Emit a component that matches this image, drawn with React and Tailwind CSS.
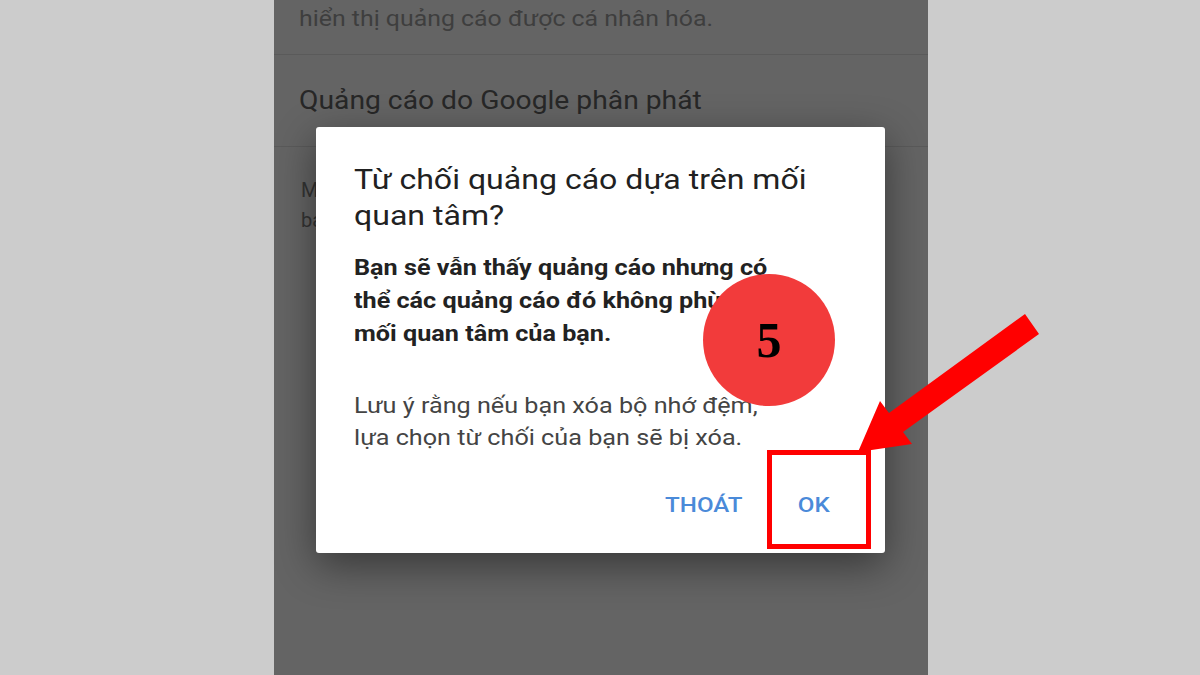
export default function App() {
  return (
    <div className="relative w-[1200px] h-[675px] overflow-hidden bg-[#cccccc] font-['Roboto',sans-serif]">
      {/* phone screen, dimmed behind the dialog */}
      <div className="relative ml-[274px] w-[654px] h-[675px] bg-[#646464]">
        <div className="h-[55px] pl-[25px] pt-[4px] border-b border-[#5a5a5a] text-[22px] text-[#3e3e3e] leading-[30px]">
          <p className="origin-left scale-x-[1.13]">hiển thị quảng cáo được cá nhân hóa.</p>
        </div>
        <div className="h-[92px] pl-[25px] pt-[31px] border-b border-[#5a5a5a] text-[25px] text-[#272727] leading-[30px]">
          <p className="origin-left scale-x-[1.13]">Quảng cáo do Google phân phát</p>
        </div>
        <div className="pl-[27px] pt-[28px] text-[20px] text-[#333333] leading-[30px]">
          <p>Mọi quảng cáo do Google phân phát</p>
          <p>bạn thấy đều dựa trên sở thích</p>
        </div>

        {/* dialog */}
        <div className="absolute left-[42px] top-[127px] w-[569px] h-[426px] bg-white rounded-[3px] shadow-[0_12px_40px_rgba(0,0,0,0.45)] pl-[38px] pr-[30px] pt-[35px]">
          <h2 className="origin-left scale-x-[1.145] text-[28px] leading-[36px] text-[#212121]">
            Từ chối quảng cáo dựa trên mối
            <br />
            quan tâm?
          </h2>
          <p className="origin-left scale-x-[1.145] mt-[17px] text-[22px] leading-[33px] font-bold text-[#222222]">
            Bạn sẽ vẫn thấy quảng cáo nhưng có
            <br />
            thể các quảng cáo đó không phù hợp
            <br />
            mối quan tâm của bạn.
          </p>
          <p className="origin-left scale-x-[1.145] mt-[40px] text-[22px] leading-[32px] text-[#444444]">
            Lưu ý rằng nếu bạn xóa bộ nhớ đệm,
            <br />
            lựa chọn từ chối của bạn sẽ bị xóa.
          </p>
          <div className="mt-[37px] flex justify-end gap-[48px] pr-[22px] text-[21px] font-medium text-[#4a8ad9] leading-[28px] origin-right scale-x-[1.15]">
            <span>THOÁT</span>
            <span>OK</span>
          </div>
        </div>
      </div>

      {/* annotations */}
      <div className="absolute left-[703px] top-[274px] w-[132px] h-[132px] rounded-full bg-[#f23b3b] flex items-center justify-center">
        <span className="text-[50px] font-bold text-black font-['Liberation_Serif','DejaVu_Serif',serif] leading-none">5</span>
      </div>
      <div className="absolute left-[767px] top-[450px] w-[104px] h-[99px] border-[5px] border-[#ff0000]" />
      <svg className="absolute left-0 top-0" width="1200" height="675" viewBox="0 0 1200 675">
        <polygon
          fill="#ff0000"
          points="858,452 912,444 903,432 1039,334 1025,314 889,413 880,401"
        />
      </svg>
    </div>
  )
}
